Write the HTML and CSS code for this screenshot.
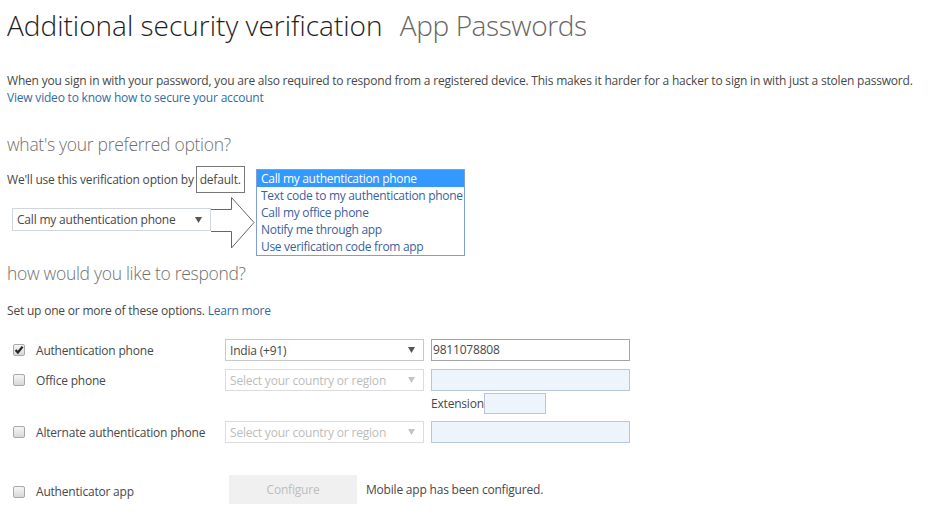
FILE: index.html
```html
<!DOCTYPE html>
<html lang="en">
<head>
    <meta charset="UTF-8">
    <title>Additional security verification</title>
    <link rel="stylesheet" href="styles.css">
</head>
<body>
    <div class="page">
        <h1 class="title">Additional security verification <span class="tab">App Passwords</span></h1>

        <p class="intro">When you sign in with your password, you are also required to respond from a registered device. This makes it harder for a hacker to sign in with just a stolen password.<br>
            <a href="#" class="link">View video to know how to secure your account</a></p>

        <h2 class="section">what's your preferred option?</h2>

        <div class="preferred">
            <p class="note">We'll use this verification option by <span class="boxed">default.</span></p>
            <div class="select pref-select">
                <span>Call my authentication phone</span>
                <svg class="caret" width="7" height="6" viewBox="0 0 7 6"><path d="M0 0H7L3.5 6Z"/></svg>
            </div>

            <svg class="callout" width="46" height="54" viewBox="0 0 46 54">
                <path d="M1 13.5H21.5V1.5L44 26.5L21.5 52V35.5H1" fill="#fff" stroke="#666" stroke-width="1"/>
            </svg>

            <ul class="listbox">
                <li class="selected">Call my authentication phone</li>
                <li>Text code to my authentication phone</li>
                <li>Call my office phone</li>
                <li>Notify me through app</li>
                <li>Use verification code from app</li>
            </ul>
        </div>

        <h2 class="section respond">how would you like to respond?</h2>
        <p class="note setup">Set up one or more of these options. <a href="#" class="link">Learn more</a></p>

        <div class="methods">
            <div class="method-row">
                <label class="method"><span class="check checked">
                    <svg width="10" height="10" viewBox="0 0 10 10"><path d="M1.6 5L3.9 7.5L8.6 1.6" fill="none" stroke="#262626" stroke-width="2.3"/></svg>
                </span>Authentication phone</label>
                <div class="select">
                    <span>India (+91)</span>
                    <svg class="caret" width="7" height="6" viewBox="0 0 7 6"><path d="M0 0H7L3.5 6Z"/></svg>
                </div>
                <div class="field">9811078808</div>
            </div>

            <div class="method-row row-office">
                <label class="method"><span class="check"></span>Office phone</label>
                <div class="select disabled">
                    <span>Select your country or region</span>
                    <svg class="caret" width="7" height="6" viewBox="0 0 7 6"><path d="M0 0H7L3.5 6Z"/></svg>
                </div>
                <div class="field disabled"></div>
            </div>

            <div class="method-row row-ext">
                <div class="ext">Extension<span class="field disabled ext-field"></span></div>
            </div>

            <div class="method-row row-alt">
                <label class="method"><span class="check"></span>Alternate authentication phone</label>
                <div class="select disabled">
                    <span>Select your country or region</span>
                    <svg class="caret" width="7" height="6" viewBox="0 0 7 6"><path d="M0 0H7L3.5 6Z"/></svg>
                </div>
                <div class="field disabled"></div>
            </div>

            <div class="method-row row-app">
                <label class="method"><span class="check"></span>Authenticator app</label>
                <div class="app-cell">
                    <button class="configure" disabled>Configure</button>
                    <span class="app-status">Mobile app has been configured.</span>
                </div>
            </div>
        </div>
    </div>
</body>
</html>
```

FILE: styles.css
```css
body {
    margin: 0;
    background: #fff;
    font-family: "Open Sans", "Segoe UI", Arial, sans-serif;
    font-size: 12px;
    letter-spacing: -0.2px;
    color: #484848;
}

.page {
    padding: 7px 0 0 7px;
}

.title {
    margin: 0;
    font-size: 28px;
    line-height: 36px;
    font-weight: 300;
    letter-spacing: 0;
    color: #1e1e1e;
    white-space: nowrap;
}

.tab {
    margin-left: 10px;
    letter-spacing: -0.4px;
    color: #666;
}

.intro {
    margin: 29px 0 0;
    line-height: 17px;
}

.link {
    color: #2f6ca6;
    text-decoration: none;
}

.section {
    margin: 26px 0 0;
    font-size: 17.5px;
    line-height: 24px;
    font-weight: 300;
    letter-spacing: -0.3px;
    color: #707070;
}

.section.respond {
    margin-top: 30px;
}

.note {
    margin: 0;
    line-height: 17px;
}

.note.setup {
    margin-top: 17px;
}

.preferred {
    position: relative;
    margin-top: 10px;
}

.boxed {
    display: inline-block;
    padding: 4px 3px;
    margin-left: -1px;
    border: 1px solid #777;
}

/* fake selects */
.select {
    display: flex;
    align-items: center;
    justify-content: space-between;
    box-sizing: border-box;
    height: 22px;
    padding: 0 8px 0 4px;
    border: 1px solid #c9c9c9;
    background: #fff;
}

.select .caret {
    fill: #555;
}

.select.disabled {
    border-color: #dcdcdc;
    color: #bcbcbc;
}

.select.disabled .caret {
    fill: #c4c4c4;
}

.pref-select {
    width: 199px;
    height: 23px;
    margin: 15px 0 0 5px;
    border-color: #cfd6dc;
}

.callout {
    position: absolute;
    left: 203px;
    top: 30px;
}

.listbox {
    position: absolute;
    left: 249px;
    top: 3px;
    width: 209px;
    box-sizing: border-box;
    margin: 0;
    padding: 0;
    list-style: none;
    border: 1px solid #7d9ed6;
    background: #fff;
}

.listbox li {
    height: 17px;
    line-height: 17px;
    padding-left: 4px;
    letter-spacing: -0.3px;
    color: #3b5f9e;
    white-space: nowrap;
}

.listbox li.selected {
    background: #3399ff;
    color: #fff;
}

/* verification methods */
.methods {
    margin: 20px 0 0 6px;
}

.method-row {
    display: grid;
    grid-template-columns: 205px 199px 199px;
    column-gap: 7px;
    align-items: center;
    height: 22px;
}

.row-office {
    margin-top: 8px;
}

.row-ext {
    height: 21px;
    margin-top: 2px;
}

.row-alt {
    margin-top: 7px;
}

.row-app {
    height: 29px;
    margin-top: 32px;
}

.method {
    display: flex;
    align-items: center;
    gap: 11px;
    white-space: nowrap;
}

.row-app .method {
    padding-top: 4px;
}

.check {
    display: flex;
    align-items: center;
    justify-content: center;
    width: 12px;
    height: 12px;
    box-sizing: border-box;
    border: 1px solid #a9a9a9;
    border-radius: 2px;
    background: linear-gradient(#f6f6f6, #d8d8d8);
}

.field {
    box-sizing: border-box;
    height: 22px;
    padding-left: 1px;
    line-height: 20px;
    border: 1px solid #a6a6a6;
}

.field.disabled {
    border-color: #b8c7d8;
    background: #eef4fb;
}

.ext {
    grid-column: 3;
    display: flex;
    align-items: center;
}

.ext-field {
    display: block;
    width: 62px;
    height: 21px;
}

.app-cell {
    grid-column: 2 / 4;
    display: flex;
    align-items: center;
    gap: 9px;
    padding-left: 4px;
}

.configure {
    width: 128px;
    height: 29px;
    border: none;
    background: #f0f0f0;
    color: #bdbdbd;
    font-family: inherit;
    font-size: 12px;
    letter-spacing: -0.2px;
}
```
